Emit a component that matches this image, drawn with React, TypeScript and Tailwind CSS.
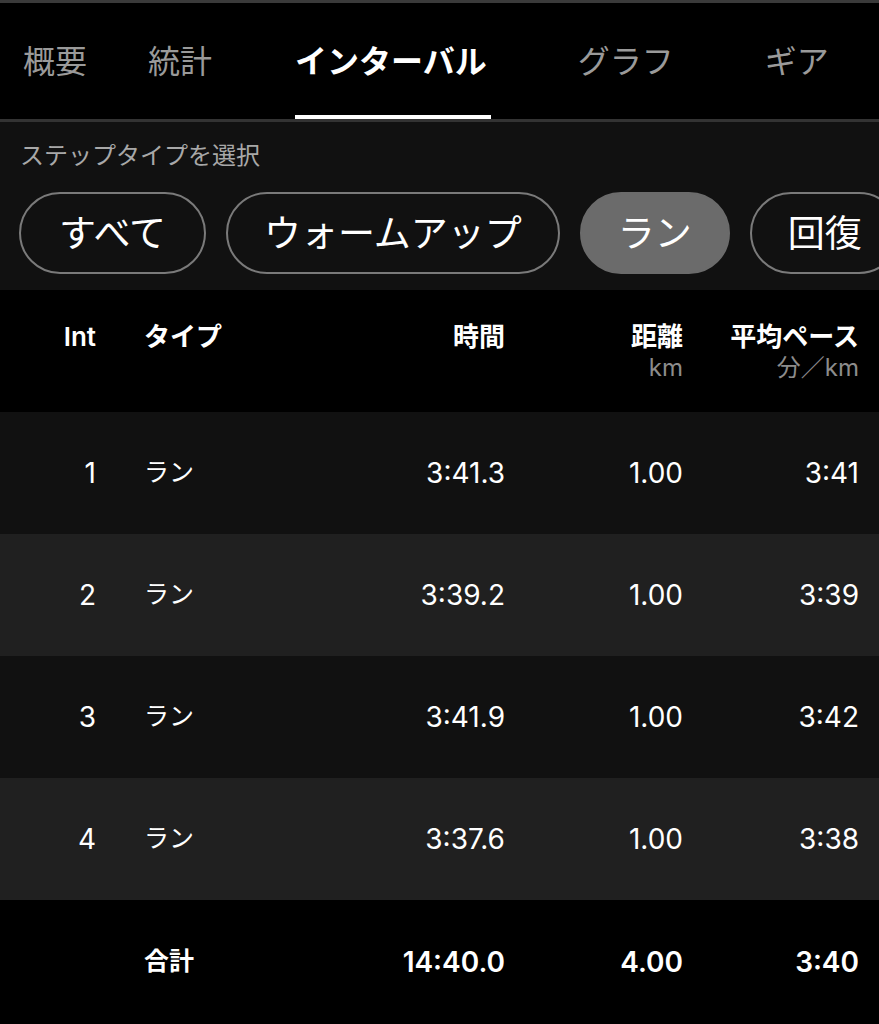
// Interval tab of a run activity: tab bar, step type filter, interval table.
const FONT = "font-['Inter','Noto_Sans_CJK_JP',sans-serif]";

const tabs = [
  { label: "概要", ml: "ml-[23px]" },
  { label: "統計", ml: "ml-[61px]" },
  { label: "インターバル", ml: "ml-[83px]", active: true },
  { label: "グラフ", ml: "ml-[91px]" },
  { label: "ギア", ml: "ml-[91px]" },
];

const pills = [
  { label: "すべて", px: "px-[38px]" },
  { label: "ウォームアップ", px: "px-[36px]" },
  { label: "ラン", px: "px-[36px]", active: true },
  { label: "回復", px: "px-[36px]" },
];

const rows = [
  { n: 1, type: "ラン", time: "3:41.3", dist: "1.00", pace: "3:41" },
  { n: 2, type: "ラン", time: "3:39.2", dist: "1.00", pace: "3:39" },
  { n: 3, type: "ラン", time: "3:41.9", dist: "1.00", pace: "3:42" },
  { n: 4, type: "ラン", time: "3:37.6", dist: "1.00", pace: "3:38" },
];

const GRID = "grid grid-cols-[96px_200px_209px_178px_176px] pr-[20px]";

export default function App() {
  return (
    <div className={`w-[879px] h-[1024px] overflow-hidden bg-black text-white ${FONT}`}>
      <div className="h-[3px] bg-[#3a3a3a]" />

      {/* tabs */}
      <div className="flex h-[116px] items-stretch whitespace-nowrap">
        {tabs.map((t) => (
          <div key={t.label} className={`${t.ml} relative flex items-center pt-[2px]`}>
            <span
              className={`text-[32px] leading-none ${
                t.active ? "font-bold text-white" : "text-[#9a9a9a]"
              }`}
            >
              {t.label}
            </span>
            {t.active && (
              <div className="absolute left-0 right-[-4px] bottom-0 h-[4px] bg-white" />
            )}
          </div>
        ))}
      </div>
      <div className="h-[3px] bg-[#333]" />

      {/* step type filter */}
      <div className="bg-[#111] h-[168px] pt-[19px] overflow-hidden">
        <div className="pl-[20px] text-[24px] leading-[30px] text-[#a8a8a8]">ステップタイプを選択</div>
        <div className="mt-[21px] flex gap-[20px] pl-[19px] whitespace-nowrap">
          {pills.map((p) => (
            <div
              key={p.label}
              className={`h-[82px] shrink-0 rounded-full ${p.px} flex items-center text-[37px] leading-none ${
                p.active ? "bg-[#6b6b6b] border-2 border-[#6b6b6b]" : "border-2 border-[#7a7a7a]"
              }`}
            >
              {p.label}
            </div>
          ))}
        </div>
      </div>

      {/* table header */}
      <div className={`${GRID} h-[122px] bg-black pt-[31px] font-semibold text-[26px] leading-[32px]`}>
        <div className="text-right">Int</div>
        <div className="pl-[48px]">タイプ</div>
        <div className="text-right">時間</div>
        <div className="text-right">
          <div>距離</div>
          <div className="font-normal text-[24px] leading-[30px] text-[#8c8c8c]">km</div>
        </div>
        <div className="text-right">
          <div>平均ペース</div>
          <div className="font-normal text-[24px] leading-[30px] text-[#8c8c8c]">分／km</div>
        </div>
      </div>

      {/* rows */}
      {rows.map((r, i) => (
        <div
          key={r.n}
          className={`${GRID} h-[122px] items-center text-[28px] ${i % 2 === 0 ? "bg-[#111]" : "bg-[#202020]"}`}
        >
          <div className="text-right">{r.n}</div>
          <div className="pl-[48px] text-[25px]">{r.type}</div>
          <div className="text-right">{r.time}</div>
          <div className="text-right">{r.dist}</div>
          <div className="text-right">{r.pace}</div>
        </div>
      ))}

      {/* total */}
      <div className={`${GRID} h-[124px] items-center bg-black font-semibold text-[28px]`}>
        <div />
        <div className="pl-[48px] text-[25px]">合計</div>
        <div className="text-right">14:40.0</div>
        <div className="text-right">4.00</div>
        <div className="text-right">3:40</div>
      </div>
    </div>
  );
}
